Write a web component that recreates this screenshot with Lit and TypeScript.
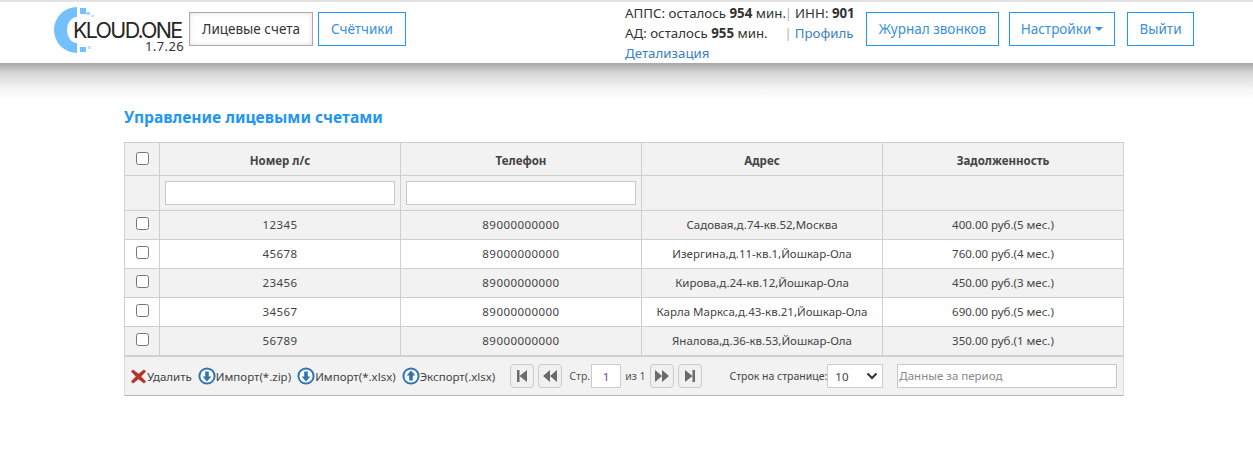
import { LitElement, html, css, svg } from "lit";
import { customElement } from "lit/decorators.js";

const rows = [
  ["12345", "89000000000", "Садовая,д.74-кв.52,Москва", "400.00 руб.(5 мес.)"],
  ["45678", "89000000000", "Изергина,д.11-кв.1,Йошкар-Ола", "760.00 руб.(4 мес.)"],
  ["23456", "89000000000", "Кирова,д.24-кв.12,Йошкар-Ола", "450.00 руб.(3 мес.)"],
  ["34567", "89000000000", "Карла Маркса,д.43-кв.21,Йошкар-Ола", "690.00 руб.(5 мес.)"],
  ["56789", "89000000000", "Яналова,д.36-кв.53,Йошкар-Ола", "350.00 руб.(1 мес.)"],
];

const arrowIcon = (up: boolean) => html`<svg class="ic" width="18" height="18" viewBox="0 0 18 18">
  <circle cx="9" cy="9" r="7.6" fill="#fff" stroke="#2f74b5" stroke-width="2"></circle>
  <path d=${up ? "M9 3.6 13.4 8.6H10.8V13.6H7.2V8.6H4.6Z" : "M9 14.4 13.4 9.4H10.8V4.4H7.2V9.4H4.6Z"} fill="#2f74b5"></path>
</svg>`;

const pagerGlyph = (d: string) => svg`<path d=${d} fill="#6b6b6b"></path>`;

@customElement("app-root")
export class AppRoot extends LitElement {
  static styles = css`
    * {
      box-sizing: border-box;
    }

    :host {
      display: block;
      min-height: 453px;
      background: #fff;
      font-family: "Noto Sans", "Open Sans", sans-serif;
      font-size: 13px;
      color: #333;
    }

    .topbar {
      display: flex;
      height: 63px;
      padding: 10px 0 0 54px;
      background: #fff;
      border-top: 2px solid #e2e2e2;
      align-items: flex-start;
    }

    .shade {
      height: 36px;
      background: linear-gradient(#a8a8a8, #d8d8d8 30%, #f4f4f4 70%, #fff);
    }

    .logo {
      display: grid;
      width: 131px;
      height: 52px;
      margin-top: -10px;
      flex: none;
    }

    .logo > * {
      grid-area: 1 / 1;
    }

    .logo-text {
      margin: 18px 0 0 19px;
      font-family: "Inter", sans-serif;
      font-size: 21.5px;
      font-weight: 400;
      line-height: 20px;
      letter-spacing: -1.7px;
      color: #262626;
      white-space: nowrap;
    }

    .logo-ver {
      margin: 38px 0 0 91px;
      font-size: 13px;
      line-height: 12px;
      letter-spacing: 0.4px;
      color: #333;
    }

    .btn {
      display: flex;
      align-items: center;
      justify-content: center;
      height: 34px;
      border: 1px solid #2196f3;
      background: #fff;
      color: #3a8fe0;
      font-size: 13.5px;
      white-space: nowrap;
    }

    .btn.current {
      border-color: #aaa;
      color: #333;
      box-shadow: inset 0 0 5px #ddd;
    }

    .b1 { width: 124px; margin-left: 4px; }
    .b2 { width: 88px; margin-left: 5px; }
    .b3 { width: 133px; }
    .b4 { width: 106px; margin-left: 10px; gap: 4px; }
    .b5 { width: 67px; margin-left: 12px; }

    .caret {
      width: 0;
      height: 0;
      border: 4px solid transparent;
      border-top-color: #3a8fe0;
      border-bottom: 0;
    }

    .info {
      width: 241px;
      margin: -9px 0 0 219px;
      font-size: 13.3px;
      line-height: 20px;
      white-space: nowrap;
      color: #333;
    }

    .info b {
      font-weight: 700;
    }

    .info a {
      color: #3b7fc4;
    }

    .sep {
      margin-left: -1px;
      color: #aaa;
      font-size: 12px;
      line-height: 1;
    }

    .line2 {
      display: flex;
    }

    .line2 .tail {
      margin-left: 18px;
    }

    main {
      width: 1000px;
      margin: 9px 0 0 124px;
    }

    h1 {
      margin: 0 0 15px;
      font-size: 15.6px;
      line-height: 19px;
      font-weight: 700;
      color: #2196f3;
    }

    table {
      width: 999px;
      table-layout: fixed;
      border-collapse: collapse;
      font-size: 11.5px;
    }

    th, td {
      padding: 0;
      border: 1px solid #cfcfcf;
      text-align: center;
      color: #444;
      font-weight: 400;
    }

    th {
      height: 33px;
      padding-top: 2px;
      background: #f2f2f2;
      font-weight: 700;
    }

    .filters td {
      height: 35px;
      background: #f2f2f2;
      padding: 0 5px;
    }

    .filters input {
      display: block;
      width: 100%;
      height: 24px;
      border: 1px solid #c8c8c8;
      background: #fff;
    }

    tbody tr.row td {
      height: 29px;
    }

    tbody tr.row td:not(:first-child) {
      padding-bottom: 2px;
    }

    tbody tr.row:nth-child(even) td {
      background: #f2f2f2;
    }

    .num {
      letter-spacing: 0.45px;
    }

    th .check {
      margin-top: -4px;
    }

    .check {
      display: block;
      width: 13px;
      height: 13px;
      margin: -3px auto 0;
      border: 1px solid #767676;
      border-radius: 2.5px;
      background: #fff;
    }

    .foot {
      display: flex;
      align-items: center;
      height: 40px;
      padding-left: 5px;
      background: #f2f2f2;
      border: 1px solid #dcdcdc;
      border-bottom-color: #b4b4b4;
      border-top-color: #cfcfcf;
      font-size: 11.5px;
      color: #444;
    }

    .action {
      display: flex;
      align-items: center;
      margin-right: 6px;
      white-space: nowrap;
    }

    .ic {
      flex: none;
    }

    .pager {
      display: flex;
      align-items: center;
      margin-left: 9px;
    }

    .pbtn {
      display: flex;
      align-items: center;
      justify-content: center;
      width: 24px;
      height: 24px;
      margin-right: 4px;
      border: 1px solid #ccc;
      border-radius: 4px;
      background: #f0f0f0;
    }

    .pager span {
      font-size: 10.5px;
      color: #555;
    }

    .pager .str {
      margin-left: 3px;
    }

    .page-num {
      display: flex;
      align-items: center;
      justify-content: center;
      width: 30px;
      height: 24px;
      margin: 0 4px 0 1px;
      border: 1px solid #ccc;
      background: #fff;
      color: #7a3e8c;
      font-size: 11px;
    }

    .pbtn.next {
      margin-left: 4px;
    }

    .per {
      display: flex;
      align-items: center;
      margin-left: 24px;
      font-size: 10.5px;
      white-space: nowrap;
    }

    .sel {
      display: flex;
      align-items: center;
      justify-content: space-between;
      width: 56px;
      height: 24px;
      padding: 0 4px 0 7px;
      border: 1px solid #ccc;
      background: #fff;
      color: #444;
      font-size: 11.5px;
    }

    .period {
      width: 220px;
      height: 24px;
      margin-left: 14px;
      padding: 0 1px;
      border: 1px solid #c8c8c8;
      background: #fff;
      color: #888;
      font-size: 11.5px;
      line-height: 22px;
    }
  `;

  render() {
    return html`
      <header class="topbar">
        <div class="logo">
          <svg width="60" height="52" viewBox="0 0 60 52">
            <path d="M23 5A23 23 0 0 0 23 51V41A10 13 0 0 1 23 15Z" fill="#74c0fc"></path>
            <rect x="26" y="6" width="6" height="6" fill="#74c0fc"></rect>
            <rect x="32" y="10" width="4" height="3" fill="#a5d8ff"></rect>
            <rect x="37" y="13" width="3" height="2" fill="#bfe3ff"></rect>
            <rect x="26" y="45" width="6" height="5" fill="#74c0fc"></rect>
            <rect x="34" y="44" width="3" height="3" fill="#bfe3ff"></rect>
          </svg>
          <div class="logo-text">KLOUD.ONE</div>
          <div class="logo-ver">1.7.26</div>
        </div>
        <div class="btn current b1">Лицевые счета</div>
        <div class="btn b2">Счётчики</div>
        <div class="info">
          <div>АППС: осталось <b>954</b> мин.<span class="sep">|</span> ИНН: <b>901</b></div>
          <div class="line2">АД: осталось <b>&nbsp;955</b>&nbsp;мин.<span class="tail"><span class="sep">|</span> <a>Профиль</a></span></div>
          <div><a>Детализация</a></div>
        </div>
        <div class="btn b3">Журнал звонков</div>
        <div class="btn b4">Настройки <i class="caret"></i></div>
        <div class="btn b5">Выйти</div>
      </header>
      <div class="shade"></div>
      <main>
        <h1>Управление лицевыми счетами</h1>
        <table>
          <colgroup>
            <col style="width:35px" /><col style="width:241px" /><col style="width:241px" /><col style="width:241px" /><col style="width:241px" />
          </colgroup>
          <thead>
            <tr>
              <th><i class="check"></i></th>
              <th>Номер л/с</th>
              <th>Телефон</th>
              <th>Адрес</th>
              <th>Задолженность</th>
            </tr>
          </thead>
          <tbody>
            <tr class="filters">
              <td></td>
              <td><input /></td>
              <td><input /></td>
              <td></td>
              <td></td>
            </tr>
            ${rows.map(
              (r) => html`<tr class="row">
                <td><i class="check"></i></td>
                <td class="num">${r[0]}</td>
                <td class="num">${r[1]}</td>
                <td>${r[2]}</td>
                <td>${r[3]}</td>
              </tr>`,
            )}
          </tbody>
        </table>
        <div class="foot">
          <div class="action">
            <svg class="ic" width="17" height="17" viewBox="0 0 17 17">
              <path d="M3 1.5 8.5 5.8 14 1.5 16 3.5 11.2 8.5 16 13.5 14 15.5 8.5 11.2 3 15.5 1 13.5 5.8 8.5 1 3.5Z" fill="#b5352c"></path>
            </svg>Удалить
          </div>
          <div class="action">${arrowIcon(false)}Импорт(*.zip)</div>
          <div class="action">${arrowIcon(false)}Импорт(*.xlsx)</div>
          <div class="action">${arrowIcon(true)}Экспорт(.xlsx)</div>
          <div class="pager">
            <div class="pbtn"><svg width="12" height="14" viewBox="0 0 12 14">${pagerGlyph("M1 1H3.5V13H1ZM11 1V13L3.5 7Z")}</svg></div>
            <div class="pbtn"><svg width="16" height="14" viewBox="0 0 16 14">${pagerGlyph("M8 1V13L1 7ZM15 1V13L8 7Z")}</svg></div>
            <span class="str">Стр.</span>
            <div class="page-num">1</div>
            <span>из 1</span>
            <div class="pbtn next"><svg width="16" height="14" viewBox="0 0 16 14">${pagerGlyph("M1 1 8 7 1 13ZM8 1 15 7 8 13Z")}</svg></div>
            <div class="pbtn"><svg width="12" height="14" viewBox="0 0 12 14">${pagerGlyph("M1 1 8.5 7 1 13ZM8.5 1H11V13H8.5Z")}</svg></div>
          </div>
          <div class="per">
            Строк на странице:
            <div class="sel">10
              <svg width="12" height="8" viewBox="0 0 12 8"><path d="M1.5 1.5 6 6 10.5 1.5" fill="none" stroke="#333" stroke-width="2"></path></svg>
            </div>
          </div>
          <div class="period">Данные за период</div>
        </div>
      </main>
    `;
  }
}
